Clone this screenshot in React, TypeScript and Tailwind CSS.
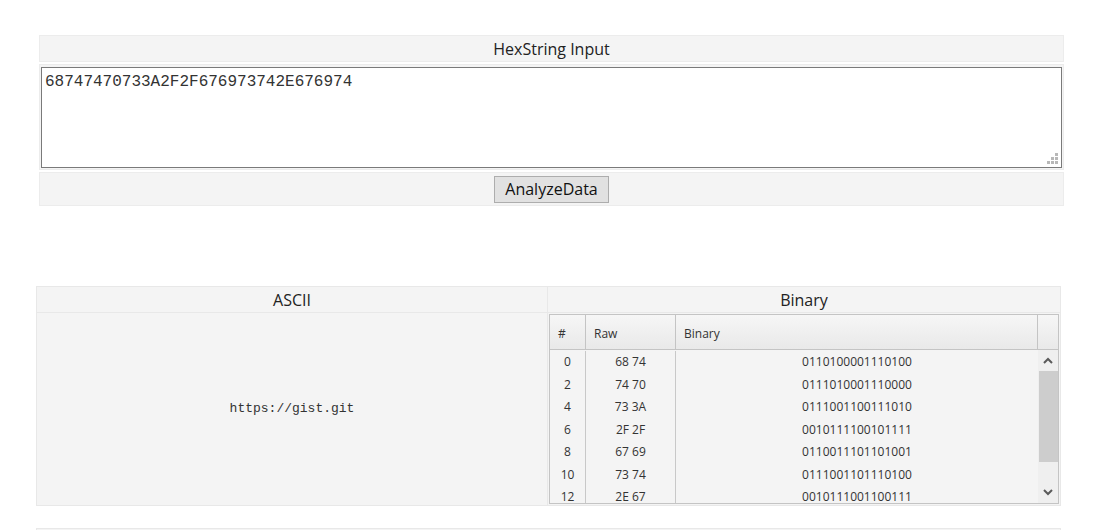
import React from 'react';

const rows = [
  { idx: 0, raw: '68 74', bin: '0110100001110100' },
  { idx: 2, raw: '74 70', bin: '0111010001110000' },
  { idx: 4, raw: '73 3A', bin: '0111001100111010' },
  { idx: 6, raw: '2F 2F', bin: '0010111100101111' },
  { idx: 8, raw: '67 69', bin: '0110011101101001' },
  { idx: 10, raw: '73 74', bin: '0111001101110100' },
  { idx: 12, raw: '2E 67', bin: '0010111001100111' },
];

const ui = { fontFamily: '"Open Sans", "Noto Sans", sans-serif' };
const mono = { fontFamily: '"Liberation Mono", "Courier New", monospace' };

const Chevron = ({ up }: { up?: boolean }) => (
  <svg width="10" height="7" viewBox="0 0 10 7">
    <polyline
      points={up ? '1,6 5,2 9,6' : '1,1 5,5 9,1'}
      fill="none"
      stroke="#5a5a5a"
      strokeWidth="2"
    />
  </svg>
);

const App: React.FC = () => {
  return (
    <div className="min-h-[530px] bg-white text-[#333]" style={ui}>
      {/* HexString input */}
      <div className="pt-[35px] pl-[39px]">
        <div className="w-[1025px] flex flex-col gap-[2px]">
          <div className="h-[27px] flex items-center justify-center bg-[#f4f4f4] border border-[#ececec] text-[16px] text-[#222]">
            HexString Input
          </div>
          <div className="h-[106px] bg-[#f4f4f4] border border-[#ececec] px-[1px] pt-[2px]">
            <div className="relative h-[101px] bg-white border border-[#7a7a7a]">
              <div className="pl-[3px] pt-[5px] text-[16px] leading-[18px] text-[#333]" style={mono}>
                68747470733A2F2F676973742E676974
              </div>
              {/* resize grip */}
              <div className="absolute right-[3px] bottom-[3px] grid grid-cols-3 gap-[1px] w-[11px]">
                <span />
                <span />
                <span className="w-[3px] h-[3px] bg-[#b8b8b8]" />
                <span />
                <span className="w-[3px] h-[3px] bg-[#b8b8b8]" />
                <span className="w-[3px] h-[3px] bg-[#b8b8b8]" />
                <span className="w-[3px] h-[3px] bg-[#b8b8b8]" />
                <span className="w-[3px] h-[3px] bg-[#b8b8b8]" />
                <span className="w-[3px] h-[3px] bg-[#b8b8b8]" />
              </div>
            </div>
          </div>
          <div className="h-[34px] flex items-center justify-center bg-[#f4f4f4] border border-[#ececec]">
            <button className="w-[115px] h-[27px] bg-[#e1e1e1] border border-[#adadad] text-[16px] text-[#111]">
              AnalyzeData
            </button>
          </div>
        </div>
      </div>

      {/* Results */}
      <div className="pt-[80px] pl-[36px]">
        <div className="w-[1025px] border border-[#e8e8e8] bg-[#f4f4f4]">
          <div className="h-[26px] flex border-b border-[#e8e8e8] text-[16px] text-[#222]">
            <div className="w-[511px] flex items-center justify-center border-r border-[#e8e8e8]">ASCII</div>
            <div className="flex-1 flex items-center justify-center">Binary</div>
          </div>
          <div className="h-[192px] flex">
            <div className="w-[511px] flex items-center justify-center border-r border-[#e8e8e8] text-[13px] text-[#333]" style={mono}>
              https://gist.git
            </div>
            <div className="flex-1 p-[1px] pb-[1px]">
              <div className="h-[190px] border border-[#c4c4c4] flex flex-col text-[12px] text-[#333] overflow-hidden">
                <div className="h-[35px] shrink-0 flex border-b border-[#c4c4c4] bg-gradient-to-b from-[#f6f6f6] to-[#e9e9e9]">
                  <div className="w-[36px] border-r border-[#c4c4c4] flex items-center pl-[8px] pt-[3px]">#</div>
                  <div className="w-[90px] border-r border-[#c4c4c4] flex items-center pl-[8px] pt-[3px]">Raw</div>
                  <div className="w-[362px] border-r border-[#c4c4c4] flex items-center pl-[8px] pt-[3px]">Binary</div>
                  <div className="flex-1" />
                </div>
                <div className="flex-1 flex min-h-0">
                  <div className="flex-1 flex flex-col pt-[1px]">
                    {rows.map((r) => (
                      <div key={r.idx} className="h-[22.5px] shrink-0 flex items-center">
                        <div className="w-[36px] h-full border-r border-[#c8c8c8] flex items-center justify-center">{r.idx}</div>
                        <div className="w-[90px] h-full border-r border-[#c8c8c8] flex items-center justify-center">{r.raw}</div>
                        <div className="w-[362px] h-full flex items-center justify-center">{r.bin}</div>
                      </div>
                    ))}
                  </div>
                  <div className="w-[20px] bg-[#efefef] flex flex-col items-center">
                    <div className="h-[21px] flex items-center justify-center">
                      <Chevron up />
                    </div>
                    <div className="w-[19px] h-[91px] bg-[#cdcdcd]" />
                    <div className="flex-1" />
                    <div className="h-[21px] flex items-center justify-center">
                      <Chevron />
                    </div>
                  </div>
                </div>
              </div>
            </div>
          </div>
        </div>
        <div className="mt-[22px] w-[1025px] h-[10px] border border-[#e8e8e8] bg-[#f4f4f4]" />
      </div>
    </div>
  );
};

export default App;
